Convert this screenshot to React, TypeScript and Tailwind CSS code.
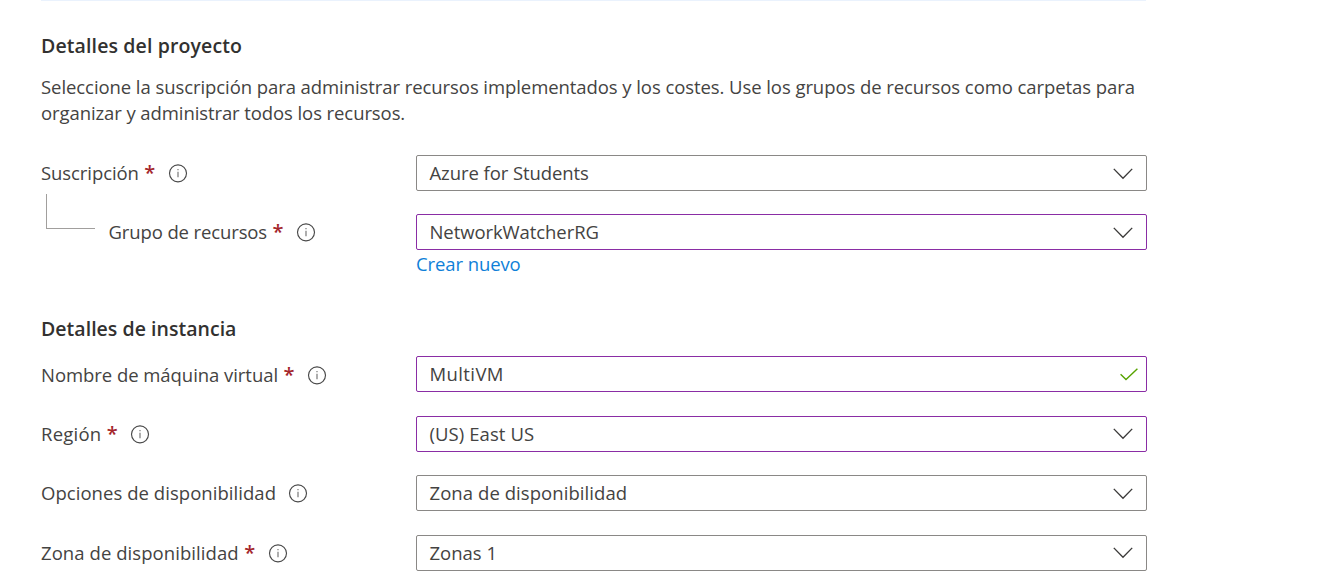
import type { ReactNode } from "react";

function InfoIcon() {
  return (
    <svg width="20" height="20" viewBox="0 0 20 20" fill="none" className="block shrink-0" aria-hidden="true">
      <circle cx="10" cy="10.3" r="8.5" stroke="#4a4a4a" strokeWidth="1.15" />
      <path d="M10 8.7V14.3" stroke="#777" strokeWidth="1.2" />
      <path d="M10 6V7.3" stroke="#777" strokeWidth="1.2" />
    </svg>
  );
}

function Chevron() {
  return (
    <svg width="20" height="12" viewBox="0 0 20 12" fill="none" className="mr-[13px] mt-px shrink-0" aria-hidden="true">
      <path d="M0.8 0.9L10 10.2L19.2 0.9" stroke="#3b3a39" strokeWidth="1.35" />
    </svg>
  );
}

function Check() {
  return (
    <svg width="18" height="13" viewBox="0 0 18 13" fill="none" className="mr-2 shrink-0" aria-hidden="true">
      <path d="M0.6 6.2L6 11.6L17.4 0.7" stroke="#57a300" strokeWidth="1.4" />
    </svg>
  );
}

type LabelProps = { text: string; spacing: string; required?: boolean };

function Label({ text, spacing, required = false }: LabelProps) {
  return (
    <div className="flex items-center whitespace-nowrap">
      <span className={spacing}>{text}</span>
      {required && <span className="ml-[5.5px] w-[10px] text-[20px] font-semibold text-[#a4262c]">*</span>}
      <span className={required ? "ml-[13.5px]" : "ml-[12px]"}>
        <InfoIcon />
      </span>
    </div>
  );
}

type FieldProps = { value: string; spacing: string; edited?: boolean; icon?: ReactNode };

function Field({ value, spacing, edited = false, icon = <Chevron /> }: FieldProps) {
  return (
    <div
      className={`flex h-9 items-center justify-between rounded-[2px] border pl-[12.5px] ${
        edited ? "border-[#8a2da5]" : "border-[#8a8886]"
      }`}
    >
      <span className={spacing}>{value}</span>
      {icon}
    </div>
  );
}

function Row({ children }: { children: ReactNode }) {
  return <div className="grid h-9 grid-cols-[375px_731px]">{children}</div>;
}

export default function App() {
  return (
    <main className="h-[576px] w-[1342px] overflow-hidden bg-white pl-[41px] font-['Open_Sans','Noto_Sans',sans-serif] text-[18.5px] leading-[26px] text-[#444342]">
      <div className="h-px w-[1105px] bg-[#eaf2fd]" />
      <section>
        <h2 className="mt-[32px] h-[26px] whitespace-nowrap text-[19.5px] font-semibold tracking-[0.12px] text-[#323130]">
          Detalles del proyecto
        </h2>
        <p className="mt-[15px] whitespace-nowrap">
          <span className="block tracking-[-0.073px]">
            Seleccione la suscripción para administrar recursos implementados y los costes. Use los grupos de recursos como carpetas para
          </span>
          <span className="block tracking-[-0.09px]">organizar y administrar todos los recursos.</span>
        </p>
        <div className="mt-[29px]">
          <Row>
            <Label text="Suscripción" spacing="tracking-[-0.08px]" required />
            <Field value="Azure for Students" spacing="tracking-[-0.08px]" />
          </Row>
          <div className="mt-[23px]">
            <Row>
              <div className="flex items-center">
                <div className="relative w-[67.5px] shrink-0">
                  <div className="absolute bottom-[3px] left-[5px] h-[35px] w-[49px] border-b border-l border-[#a19f9d]" />
                </div>
                <Label text="Grupo de recursos" spacing="tracking-[-0.12px]" required />
              </div>
              <Field value="NetworkWatcherRG" spacing="tracking-[-0.08px]" edited />
            </Row>
          </div>
          <a className="ml-[375px] mt-[1px] block w-fit tracking-[-0.1px] text-[#0f7fd8]">Crear nuevo</a>
        </div>
      </section>
      <section className="mt-[39px]">
        <h2 className="h-[26px] whitespace-nowrap text-[19.5px] font-semibold tracking-[0.03px] text-[#323130]">
          Detalles de instancia
        </h2>
        <div className="mt-[14px] grid gap-y-[23.67px]">
          <Row>
            <div className="flex items-center pt-px">
              <Label text="Nombre de máquina virtual" spacing="tracking-[-0.05px]" required />
            </div>
            <Field value="MultiVM" spacing="tracking-[0.4px]" edited icon={<Check />} />
          </Row>
          <Row>
            <Label text="Región" spacing="tracking-[0.22px]" required />
            <Field value="(US) East US" spacing="tracking-[0.08px]" edited />
          </Row>
          <Row>
            <Label text="Opciones de disponibilidad" spacing="tracking-[0.05px]" />
            <Field value="Zona de disponibilidad" spacing="tracking-[0.07px]" />
          </Row>
          <Row>
            <Label text="Zona de disponibilidad" spacing="tracking-[0.07px]" required />
            <Field value="Zonas 1" spacing="tracking-[0px]" />
          </Row>
        </div>
      </section>
    </main>
  );
}
